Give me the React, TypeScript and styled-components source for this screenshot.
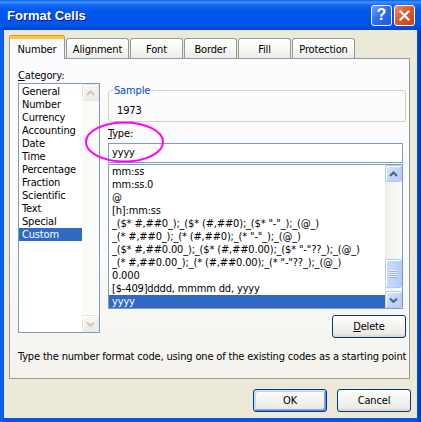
import React from 'react';
import styled, { createGlobalStyle } from 'styled-components';

const FONT = `"DejaVu Sans Condensed", Tahoma, "Liberation Sans", sans-serif`;

const Global = createGlobalStyle`
  html, body { margin: 0; padding: 0; background: #ffffff; }
  body { font-family: ${FONT}; font-size: 11px; letter-spacing: -0.16px; color: #000; }
  * { box-sizing: border-box; }
`;

const Window = styled.div`
  width: 421px;
  height: 422px;
  display: flex;
  flex-direction: column;
  background: linear-gradient(to right, #0842d2 0, #1a6cf2 1px, #0055ea 3px, #0055ea 417px, #0040c8 419px, #002da8 421px);
`;

const TitleBar = styled.div`
  height: 30px;
  flex: none;
  display: flex;
  align-items: center;
  padding: 0 6px 0 7px;
  background: linear-gradient(to bottom, #0a5ef4 0%, #3d95ff 7%, #1566f2 17%, #0058ec 35%, #0055ea 75%, #0050e2 90%, #0042cf 100%);
`;

const Title = styled.div`
  flex: 1;
  color: #ffffff;
  font: bold 13px "Liberation Sans", Arial, sans-serif;
  text-shadow: 1px 1px 0 #0a1883;
  letter-spacing: 0;
`;

const CaptionButton = styled.div<{ $kind: 'help' | 'close' }>`
  width: 21px;
  height: 21px;
  margin-left: 2px;
  border: 1px solid #ffffff;
  border-radius: 3px;
  display: flex;
  align-items: center;
  justify-content: center;
  background: ${p => p.$kind === 'close'
    ? 'linear-gradient(135deg, #f08a66 0%, #e2592f 45%, #c8401c 100%)'
    : 'linear-gradient(135deg, #6fa2ff 0%, #2f6ff0 45%, #1d54dc 100%)'};
  color: #fff;
  font: bold 16px "Liberation Sans", Arial, sans-serif;
  letter-spacing: 0;
`;

const Body = styled.div`
  flex: 1;
  margin: 0 4px 4px 4px;
  background: #ece9d8;
  display: flex;
  flex-direction: column;
  padding: 6px 6px 6px 5px;
`;

const TabStrip = styled.div`
  height: 22px;
  display: flex;
  align-items: flex-end;
  position: relative;
  z-index: 1;
`;

const Tab = styled.div<{ $active?: boolean; $w: number }>`
  width: ${p => p.$w}px;
  height: ${p => (p.$active ? 23 : 20)}px;
  margin-bottom: ${p => (p.$active ? -1 : 0)}px;
  & + & { margin-left: 1px; }
  border: 1px solid #919b9c;
  border-bottom: none;
  border-radius: 3px 3px 0 0;
  display: flex;
  align-items: center;
  justify-content: center;
  padding-top: 1px;
  background: ${p => (p.$active
    ? '#fcfcfe'
    : 'linear-gradient(to bottom, #ffffff 0%, #f7f7f4 50%, #ecebe6 100%)')};
  ${p => p.$active && 'border-top: 3px solid #ffc83c; box-shadow: 0 -1px 0 #e68b2c;'}
`;

const Panel = styled.div`
  position: relative;
  width: 401px;
  height: 321px;
  flex: none;
  border: 1px solid #919b9c;
  background: linear-gradient(to bottom, #fcfcfe 0%, #fafaf8 60%, #f4f3ee 100%);
  padding: 10px 3px 15px 8px;
  display: flex;
  flex-direction: column;
`;

const Columns = styled.div`
  display: flex;
  gap: 8px;
  height: 269px;
`;

const LeftCol = styled.div`
  width: 82px;
  display: flex;
  flex-direction: column;
`;

const RightCol = styled.div`
  flex: 1;
  display: flex;
  flex-direction: column;
`;

const Label = styled.div<{ $mt?: number }>`
  height: 13px;
  line-height: 13px;
  margin-top: ${p => p.$mt ?? 0}px;
  white-space: nowrap;
`;

const ListBox = styled.div<{ $h: number; $mt: number; $mr?: number }>`
  height: ${p => p.$h}px;
  margin-top: ${p => p.$mt}px;
  margin-right: ${p => p.$mr ?? 0}px;
  border: 1px solid #7f9db9;
  background: #ffffff;
  display: flex;
  overflow: hidden;
`;

const Items = styled.div<{ $pt?: number }>`
  flex: 1;
  min-width: 0;
  padding-top: ${p => p.$pt ?? 0}px;
`;

const Item = styled.div<{ $selected?: boolean }>`
  height: 13px;
  line-height: 13px;
  padding-left: 3px;
  white-space: pre;
  overflow: hidden;
  background: ${p => (p.$selected ? '#316ac5' : 'transparent')};
  color: ${p => (p.$selected ? '#ffffff' : '#000000')};
`;

const ScrollBar = styled.div<{ $disabled?: boolean }>`
  width: 17px;
  flex: none;
  display: flex;
  flex-direction: column;
  background: ${p => (p.$disabled ? '#fbfbf8' : 'linear-gradient(to right, #eeede5 0%, #f6f5f0 40%, #fbfbf8 100%)')};
`;

const ScrollButton = styled.div<{ $disabled?: boolean }>`
  height: 17px;
  flex: none;
  border: 1px solid ${p => (p.$disabled ? '#e8e6dc' : '#b4c8f6')};
  border-radius: 2px;
  display: flex;
  align-items: center;
  justify-content: center;
  background: ${p => (p.$disabled
    ? 'linear-gradient(to bottom, #f7f6f1, #ecebe4)'
    : 'linear-gradient(135deg, #dde7fe 0%, #c3d4fd 50%, #b7cbf8 100%)')};
  box-shadow: inset 1px 1px 0 #ffffff;
`;

const Track = styled.div`
  flex: 1;
  display: flex;
  flex-direction: column;
  justify-content: flex-end;
  padding-bottom: 3px;
`;

const Thumb = styled.div`
  height: 29px;
  border: 1px solid #b4c8f6;
  border-radius: 2px;
  background: linear-gradient(to right, #c9d8fc 0%, #c3d4fd 50%, #b7cbf8 100%);
  box-shadow: inset 1px 1px 0 #ffffff;
  display: flex;
  flex-direction: column;
  align-items: center;
  justify-content: center;
  gap: 1px;
`;

const Grip = styled.div`
  width: 7px;
  height: 1px;
  background: #eef4fe;
  box-shadow: 0 1px 0 #8cb0f8;
`;

const Group = styled.fieldset`
  margin: 15px 0 0 0;
  padding: 7px 4px 4px 4px;
  border: 1px solid #d0d0bf;
  border-radius: 3px;
  min-width: 0;
`;

const Legend = styled.legend`
  padding: 0 1px;
  color: #0046d5;
  line-height: 13px;
  height: 13px;
`;

const GroupValue = styled.div`
  height: 13px;
  line-height: 13px;
  padding-left: 4px;
`;

const TextInput = styled.div`
  height: 20px;
  margin-top: 3px;
  margin-right: 3px;
  border: 1px solid #7f9db9;
  background: #ffffff;
  padding-left: 3px;
  line-height: 18px;
`;

const XpButton = styled.div<{ $default?: boolean }>`
  width: 74px;
  height: 23px;
  flex: none;
  border: 1px solid #003c74;
  border-radius: 3px;
  display: flex;
  align-items: center;
  justify-content: center;
  background: linear-gradient(to bottom, #ffffff 0%, #f6f6f3 35%, #ecebe6 85%, #d6d0c5 100%);
  box-shadow: ${p => (p.$default
    ? 'inset 1px 1px 0 #cee7ff, inset -1px -1px 0 #6982ee, inset 2px 2px 0 #bcd4f6, inset -2px -2px 0 #89ade4'
    : 'none')};
`;

const DeleteRow = styled.div`
  display: flex;
  justify-content: flex-end;
  margin-top: 6px;
`;

const Description = styled.div`
  margin-top: 12px;
  height: 13px;
  line-height: 13px;
  white-space: nowrap;
`;

const ButtonRow = styled.div`
  display: flex;
  justify-content: flex-end;
  gap: 10px;
  margin-top: 10px;
`;

const Highlight = styled.svg`
  position: absolute;
  left: 74px;
  top: 61px;
  pointer-events: none;
  overflow: visible;
`;

const Arrow = ({ down, color }: { down?: boolean; color: string }) => (
  <svg width="9" height="6" viewBox="0 0 9 6">
    <polyline
      points={down ? '1,1.5 4.5,5 8,1.5' : '1,5 4.5,1.5 8,5'}
      fill="none"
      stroke={color}
      strokeWidth="2"
    />
  </svg>
);

const categories = [
  'General', 'Number', 'Currency', 'Accounting', 'Date', 'Time',
  'Percentage', 'Fraction', 'Scientific', 'Text', 'Special', 'Custom',
];

const formats = [
  'mm:ss',
  'mm:ss.0',
  '@',
  '[h]:mm:ss',
  '_($* #,##0_);_($* (#,##0);_($* "-"_);_(@_)',
  '_(* #,##0_);_(* (#,##0);_(* "-"_);_(@_)',
  '_($* #,##0.00_);_($* (#,##0.00);_($* "-"??_);_(@_)',
  '_(* #,##0.00_);_(* (#,##0.00);_(* "-"??_);_(@_)',
  '0.000',
  '[$-409]dddd, mmmm dd, yyyy',
  'yyyy',
];

const tabs: { label: string; w: number }[] = [
  { label: 'Number', w: 56 },
  { label: 'Alignment', w: 63 },
  { label: 'Font', w: 53 },
  { label: 'Border', w: 53 },
  { label: 'Fill', w: 53 },
  { label: 'Protection', w: 63 },
];

export default function App() {
  return (
    <>
      <Global />
      <Window>
        <TitleBar>
          <Title>Format Cells</Title>
          <CaptionButton $kind="help">?</CaptionButton>
          <CaptionButton $kind="close">
            <svg width="11" height="11" viewBox="0 0 11 11">
              <path d="M1.5 1.5 L9.5 9.5 M9.5 1.5 L1.5 9.5" stroke="#fff" strokeWidth="2.2" strokeLinecap="square" />
            </svg>
          </CaptionButton>
        </TitleBar>
        <Body>
          <TabStrip>
            {tabs.map((t, i) => (
              <Tab key={t.label} $w={t.w} $active={i === 0}>{t.label}</Tab>
            ))}
          </TabStrip>
          <Panel>
            <Columns>
              <LeftCol>
                <Label><u>C</u>ategory:</Label>
                <ListBox $h={250} $mt={1}>
                  <Items $pt={1}>
                    {categories.map(c => (
                      <Item key={c} $selected={c === 'Custom'}>{c}</Item>
                    ))}
                  </Items>
                  <ScrollBar $disabled>
                    <ScrollButton $disabled><Arrow color="#c9c7ba" /></ScrollButton>
                    <Track />
                    <ScrollButton $disabled><Arrow down color="#c9c7ba" /></ScrollButton>
                  </ScrollBar>
                </ListBox>
              </LeftCol>
              <RightCol>
                <Group>
                  <Legend>Sample</Legend>
                  <GroupValue>1973</GroupValue>
                </Group>
                <Label $mt={5}><u>T</u>ype:</Label>
                <TextInput>yyyy</TextInput>
                <ListBox $h={145} $mt={1} $mr={3}>
                  <Items>
                    {formats.map(f => (
                      <Item key={f} $selected={f === 'yyyy'}>{f}</Item>
                    ))}
                  </Items>
                  <ScrollBar>
                    <ScrollButton><Arrow color="#4d6185" /></ScrollButton>
                    <Track>
                      <Thumb>
                        <Grip /><Grip /><Grip /><Grip />
                      </Thumb>
                    </Track>
                    <ScrollButton><Arrow down color="#4d6185" /></ScrollButton>
                  </ScrollBar>
                </ListBox>
                <DeleteRow>
                  <XpButton><span><u>D</u>elete</span></XpButton>
                </DeleteRow>
              </RightCol>
            </Columns>
            <Description>Type the number format code, using one of the existing codes as a starting point</Description>
            <Highlight width="84" height="45" viewBox="0 0 84 45">
              <ellipse cx="40.5" cy="22" rx="38.5" ry="19.5" fill="none" stroke="#ff00ff" strokeWidth="2" />
            </Highlight>
          </Panel>
          <ButtonRow>
            <XpButton $default>OK</XpButton>
            <XpButton>Cancel</XpButton>
          </ButtonRow>
        </Body>
      </Window>
    </>
  );
}
